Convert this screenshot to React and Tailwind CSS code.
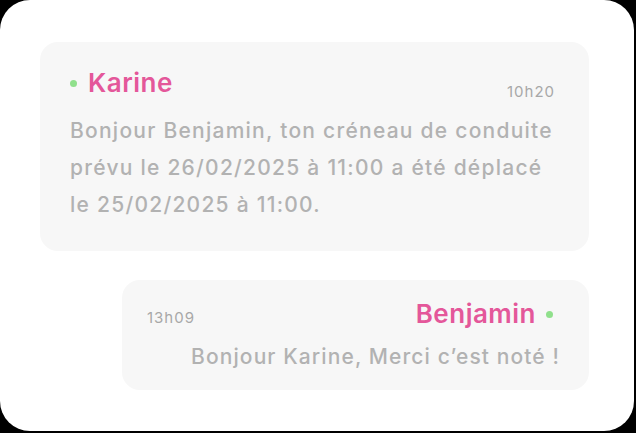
export default function App() {
  return (
    <div className="w-[636px] h-[433px] bg-black">
      <div
        className="w-[634px] h-[431px] bg-white rounded-[30px] pt-[42px] pl-[40px] pr-[45px]"
        style={{ fontFamily: 'Inter, "Noto Sans", sans-serif' }}
      >
        {/* received message */}
        <div className="h-[209px] bg-[#f7f7f7] rounded-[18px] pl-[30px] pr-[34px] pt-[24px]">
          <div className="flex items-start justify-between">
            <div className="flex items-center gap-[11px]">
              <span className="w-[7px] h-[7px] rounded-full bg-[#90e08c]" />
              <span className="text-[26px] leading-[34px] font-semibold tracking-[0.5px] text-[#e4579a]">Karine</span>
            </div>
            <span className="mt-[15px] text-[15px] leading-[22px] tracking-[1px] text-[#a8a8a8]">10h20</span>
          </div>
          <p className="mt-[9px] text-[21px] leading-[37px] font-medium text-[#b2b2b2] tracking-[1.25px]">
            Bonjour Benjamin, ton créneau de conduite
            <br />
            prévu le 26/02/2025 à 11:00 a été déplacé
            <br />
            le 25/02/2025 à 11:00.
          </p>
        </div>

        {/* sent message */}
        <div className="ml-[82px] mt-[29px] h-[110px] bg-[#f7f7f7] rounded-[18px] pl-[25px] pr-[32px] pt-[17px]">
          <div className="flex items-start justify-between">
            <span className="mt-[10px] text-[15px] leading-[22px] tracking-[1px] text-[#a8a8a8]">13h09</span>
            <div className="flex items-center gap-[10px] mr-[4px]">
              <span className="text-[26px] leading-[34px] font-semibold tracking-[0.5px] text-[#e4579a]">Benjamin</span>
              <span className="w-[7px] h-[7px] rounded-full bg-[#90e08c]" />
            </div>
          </div>
          <p className="mt-[12px] mr-[-3px] text-right text-[21px] leading-[28px] font-medium text-[#b2b2b2] tracking-[1.1px]">
            Bonjour Karine, Merci c’est noté !
          </p>
        </div>
      </div>
    </div>
  );
}
